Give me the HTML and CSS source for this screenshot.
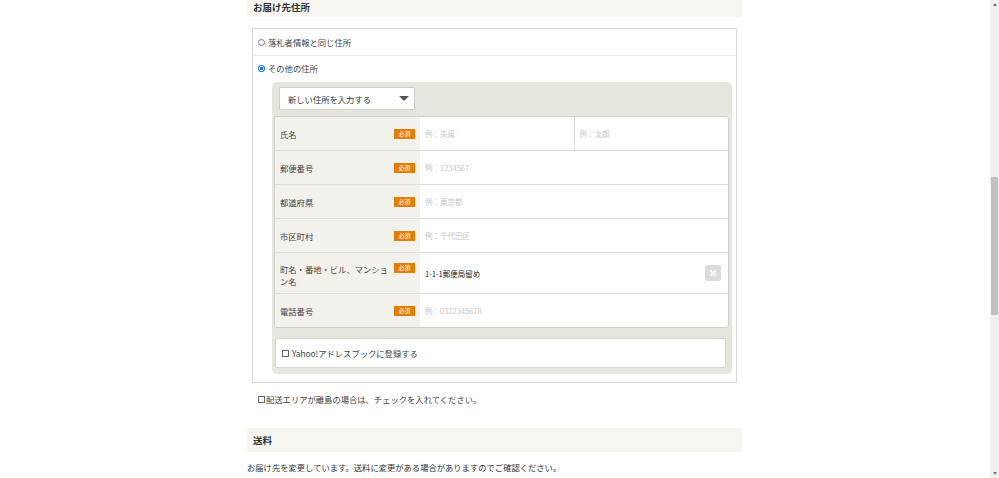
FILE: index.html
```html
<!DOCTYPE html>
<html lang="ja">
<head>
<meta charset="utf-8">
<title>お届け先住所</title>
<link rel="stylesheet" href="styles.css">
</head>
<body>
<div class="page">
  <div class="main">
    <div class="content">
      <div class="sec-head sec-top">お届け先住所</div>
      <div class="addr-box">
        <div class="opt opt-first"><span class="radio"></span>落札者情報と同じ住所</div>
        <div class="opt-other">
          <div class="opt opt-second"><span class="radio on"></span>その他の住所</div>
          <div class="panel">
            <div class="select"><span>新しい住所を入力する</span><span class="caret"></span></div>
            <div class="form">
              <div class="row">
                <div class="label"><span class="txt">氏名</span><span class="badge">必須</span></div>
                <div class="field"><span class="ph">例：矢風</span></div>
                <div class="field field-split"><span class="ph">例：太郎</span></div>
              </div>
              <div class="row">
                <div class="label"><span class="txt">郵便番号</span><span class="badge">必須</span></div>
                <div class="field"><span class="ph">例：1234567</span></div>
              </div>
              <div class="row">
                <div class="label"><span class="txt">都道府県</span><span class="badge">必須</span></div>
                <div class="field"><span class="ph">例：東京都</span></div>
              </div>
              <div class="row">
                <div class="label"><span class="txt">市区町村</span><span class="badge">必須</span></div>
                <div class="field"><span class="ph">例：千代田区</span></div>
              </div>
              <div class="row row-tall">
                <div class="label"><span class="txt">町名・番地・ビル、マンション名</span><span class="badge">必須</span></div>
                <div class="field"><span class="val">1-1-1郵便局留め</span><span class="clear"><svg width="8" height="8" viewBox="0 0 8 8"><path d="M1 1L7 7M7 1L1 7" stroke="#fff" stroke-width="1.3" fill="none"/></svg></span></div>
              </div>
              <div class="row">
                <div class="label"><span class="txt">電話番号</span><span class="badge">必須</span></div>
                <div class="field"><span class="ph">例：0312345678</span></div>
              </div>
            </div>
            <div class="yahoo"><span class="check"></span>Yahoo!アドレスブックに登録する</div>
          </div>
        </div>
      </div>
      <div class="island"><span class="check"></span>配送エリアが離島の場合は、チェックを入れてください。</div>
      <div class="sec-head sec-fee">送料</div>
      <p class="note">お届け先を変更しています。送料に変更がある場合がありますのでご確認ください。</p>
    </div>
  </div>
  <div class="scrollbar">
    <div class="sb-btn"><span class="arr-up"></span></div>
    <div class="sb-thumb"></div>
    <div class="sb-fill"></div>
    <div class="sb-btn"><span class="arr-down"></span></div>
  </div>
</div>
</body>
</html>
```
FILE: styles.css
```css
html, body {
  margin: 0;
  padding: 0;
  height: 100%;
}
body {
  font-family: "Noto Sans CJK JP", "Noto Sans", sans-serif;
  font-size: 8.3px;
  color: #333;
  background: #fff;
  overflow: hidden;
}
.page {
  display: flex;
  height: 478px;
}
.main {
  flex: 1;
}
.content {
  width: 495px;
  margin-left: 247px;
}
.sec-head {
  background: #f6f5f0;
  font-weight: bold;
  font-size: 9.5px;
  padding-left: 6px;
  color: #333;
}
.sec-top {
  height: 17px;
  line-height: 14px;
}
.sec-fee {
  height: 24px;
  line-height: 24px;
  margin-top: 22px;
}
.addr-box {
  margin: 11px 5px 0;
  border: 1px solid #d9d9d9;
}
.opt {
  display: flex;
  align-items: center;
  gap: 3px;
  padding-left: 5px;
  color: #444;
}
.opt-first {
  height: 26px;
  border-bottom: 1px solid #e8e8e8;
}
.opt-second {
  height: 24px;
}
.radio {
  width: 7px;
  height: 7px;
  box-sizing: border-box;
  border: 1px solid #777;
  border-radius: 50%;
  background: #fff;
}
.radio.on {
  border: 0;
  background: radial-gradient(circle, #1a73e8 0 1.5px, #fff 1.9px 2.2px, #1a73e8 2.6px);
}
.panel {
  margin: 2px 4px 8px 19px;
  background: #e6e5de;
  border-radius: 5px;
  padding: 5px 3px 6px 2px;
}
.select {
  margin-left: 5px;
  width: 136px;
  height: 23px;
  box-sizing: border-box;
  border: 1px solid #cfcfcf;
  background: #fff;
  display: flex;
  align-items: center;
  justify-content: space-between;
  padding: 0 5px 0 8px;
  color: #333;
}
.caret {
  width: 0;
  height: 0;
  border-left: 5px solid transparent;
  border-right: 5px solid transparent;
  border-top: 5px solid #555;
}
.form {
  margin-top: 6px;
  background: #fff;
  border: 1px solid #cfcfcf;
  border-radius: 0 3px 3px 3px;
  overflow: hidden;
}
.row {
  display: flex;
  min-height: 33px;
  border-bottom: 1px solid #dedede;
}
.row:last-child {
  border-bottom: 0;
}
.label {
  width: 145px;
  flex: none;
  box-sizing: border-box;
  background: #f2f1ec;
  display: flex;
  align-items: center;
  justify-content: space-between;
  padding: 0 5px;
  color: #444;
}
.label .txt {
  width: 110px;
  line-height: 12px;
}
.row-tall {
  min-height: 40px;
}
.row-tall .label {
  align-items: flex-start;
  padding-top: 10px;
}
.badge {
  width: 21px;
  height: 10px;
  flex: none;
  background: #e57c00;
  color: #fff;
  font-size: 6px;
  line-height: 10px;
  text-align: center;
}
.field {
  flex: 1;
  display: flex;
  align-items: center;
  padding: 0 7px 0 5px;
}
.field-split {
  border-left: 1px solid #dedede;
}
.ph {
  color: #c6c6c6;
  font-size: 7.5px;
}
.val {
  color: #222;
  font-size: 7.5px;
}
.clear {
  margin-left: auto;
  width: 16px;
  height: 16px;
  background: #dcdcdc;
  border-radius: 2px;
  display: flex;
  align-items: center;
  justify-content: center;
}
.yahoo {
  margin: 10px 3px 0 1px;
  height: 30px;
  box-sizing: border-box;
  background: #fff;
  border: 1px solid #d5d5d5;
  border-radius: 2px;
  display: flex;
  align-items: center;
  gap: 3px;
  padding-left: 6px;
  color: #444;
}
.check {
  width: 7px;
  height: 7px;
  box-sizing: border-box;
  border: 1px solid #666;
  background: #fff;
  flex: none;
}
.island {
  margin-top: 9px;
  padding-left: 11px;
  display: flex;
  align-items: center;
  gap: 1px;
  line-height: 14px;
  color: #444;
}
.note {
  margin: 8px 0 0;
  line-height: 14px;
  color: #333;
}
.scrollbar {
  width: 9px;
  background: #f1f1f1;
  display: flex;
  flex-direction: column;
  align-items: center;
}
.sb-btn {
  height: 9px;
  width: 9px;
  display: flex;
  align-items: center;
  justify-content: center;
}
.arr-up {
  width: 0;
  height: 0;
  border-left: 2.5px solid transparent;
  border-right: 2.5px solid transparent;
  border-bottom: 3px solid #777;
}
.arr-down {
  width: 0;
  height: 0;
  border-left: 2.5px solid transparent;
  border-right: 2.5px solid transparent;
  border-top: 3px solid #777;
}
.sb-thumb {
  margin-top: 168px;
  width: 7px;
  height: 138px;
  background: #c1c1c1;
}
.sb-fill {
  flex: 1;
}
```
